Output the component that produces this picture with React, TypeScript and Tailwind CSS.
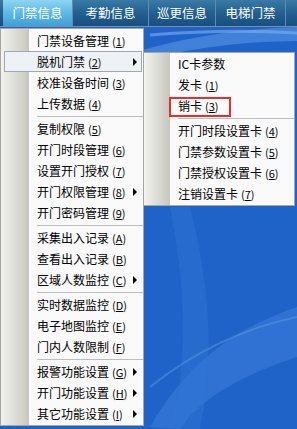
import React from "react";

type Item =
  | { kind: "item"; label: string; key: string; sub?: boolean; hot?: boolean }
  | { kind: "sep" };

const mainItems: Item[] = [
  { kind: "item", label: "门禁设备管理", key: "1" },
  { kind: "item", label: "脱机门禁", key: "2", sub: true, hot: true },
  { kind: "item", label: "校准设备时间", key: "3" },
  { kind: "item", label: "上传数据", key: "4" },
  { kind: "sep" },
  { kind: "item", label: "复制权限", key: "5" },
  { kind: "item", label: "开门时段管理", key: "6" },
  { kind: "item", label: "设置开门授权", key: "7" },
  { kind: "item", label: "开门权限管理", key: "8", sub: true },
  { kind: "item", label: "开门密码管理", key: "9" },
  { kind: "sep" },
  { kind: "item", label: "采集出入记录", key: "A" },
  { kind: "item", label: "查看出入记录", key: "B" },
  { kind: "item", label: "区域人数监控", key: "C", sub: true },
  { kind: "sep" },
  { kind: "item", label: "实时数据监控", key: "D" },
  { kind: "item", label: "电子地图监控", key: "E" },
  { kind: "item", label: "门内人数限制", key: "F" },
  { kind: "sep" },
  { kind: "item", label: "报警功能设置", key: "G", sub: true },
  { kind: "item", label: "开门功能设置", key: "H", sub: true },
  { kind: "item", label: "其它功能设置", key: "I", sub: true },
];

const subItems: Item[] = [
  { kind: "item", label: "IC卡参数", key: "" },
  { kind: "item", label: "发卡", key: "1" },
  { kind: "item", label: "销卡", key: "3" },
  { kind: "sep" },
  { kind: "item", label: "开门时段设置卡", key: "4" },
  { kind: "item", label: "门禁参数设置卡", key: "5" },
  { kind: "item", label: "门禁授权设置卡", key: "6" },
  { kind: "item", label: "注销设置卡", key: "7" },
];

function Label({ label, k }: { label: string; k: string }) {
  return (
    <span className="whitespace-nowrap">
      {label}
      {k && (
        <span className="ml-[3px] text-[11px]">
          (<span className="underline underline-offset-1">{k}</span>)
        </span>
      )}
    </span>
  );
}

function Arrow() {
  return (
    <span className="ml-auto h-0 w-0 border-y-[4px] border-l-[4px] border-y-transparent border-l-black" />
  );
}

function MainMenu() {
  return (
    <div className="absolute left-0 top-[28px] h-[398px] w-[144px] border border-[#a6a6a6] bg-[linear-gradient(90deg,#f3f3ef_0px,#c7c7bf_28px,#fafafa_28px)] pt-[1px]">
      {mainItems.map((it, i) =>
        it.kind === "sep" ? (
          <div key={i} className="flex h-[4px] items-center pl-[36px]">
            <div className="h-[1px] w-full bg-[#bdbdbd]" />
          </div>
        ) : it.hot ? (
          <div
            key={i}
            className="ml-[3px] mr-[1px] flex h-[21px] items-center border border-[#9ea8b4] bg-[#eef2f6] pl-[32px] pr-[4px]"
          >
            <Label label={it.label} k={it.key} />
            {it.sub && <Arrow />}
          </div>
        ) : (
          <div key={i} className="flex h-[21px] items-center pl-[36px] pr-[6px]">
            <Label label={it.label} k={it.key} />
            {it.sub && <Arrow />}
          </div>
        )
      )}
    </div>
  );
}

function SubMenu() {
  return (
    <div className="absolute left-[143px] top-[52px] h-[154px] w-[152px] border border-[#a6a6a6] bg-[linear-gradient(90deg,#f3f3ef_0px,#c7c7bf_26px,#fafafa_26px)]">
      {subItems.map((it, i) =>
        it.kind === "sep" ? (
          <div key={i} className="flex h-[4px] items-center pl-[34px]">
            <div className="h-[1px] w-full bg-[#bdbdbd]" />
          </div>
        ) : (
          <div key={i} className="flex h-[21px] items-center pl-[34px]">
            <Label label={it.label} k={it.key} />
          </div>
        )
      )}
      <div className="absolute left-[25px] top-[44px] h-[20px] w-[62px] border-2 border-[#ec2b2b]" />
    </div>
  );
}

const tabs = [
  { t: "门禁信息", w: "w-[70px]", active: true },
  { t: "考勤信息", w: "w-[76px]" },
  { t: "巡更信息", w: "w-[67px]" },
  { t: "电梯门禁", w: "w-[70px]" },
];

export default function App() {
  return (
    <div
      className="relative h-[429px] w-[297px] overflow-hidden bg-[#1f63c9] text-[12px] text-black"
      style={{ fontFamily: '"Noto Sans CJK SC", "Noto Sans", sans-serif' }}
    >
      <div className="flex h-[27px] border-b border-[#7d90a3] bg-[linear-gradient(180deg,#3a7aa6_0%,#235f8f_50%,#174f80_100%)] pl-[3px]">
        {tabs.map((tb) => (
          <div
            key={tb.t}
            className={`flex ${tb.w} items-center justify-center border-r border-[#5d8db3] text-[12.5px] text-white ${
              tb.active
                ? "bg-[linear-gradient(180deg,#8ed5f2_0%,#62bbe6_45%,#3f9fd6_100%)]"
                : ""
            }`}
          >
            {tb.t}
          </div>
        ))}
      </div>
      <svg
        className="absolute left-0 top-[27px]"
        width="297"
        height="402"
        viewBox="0 0 297 402"
      >
        <rect width="297" height="402" fill="#1f63c9" />
        <path d="M120 30 C180 10 240 2 297 0 L297 14 C240 14 180 22 120 40 Z" fill="#5d9be6" opacity="0.55" />
        <path d="M150 8 C200 4 250 3 297 6" stroke="#7fb2ee" strokeWidth="3" fill="none" opacity="0.6" />
        <path d="M150 400 C190 330 240 300 297 280 L297 330 C250 345 200 370 180 402 Z" fill="#3a7ddb" opacity="0.6" />
        <path d="M170 180 C185 260 190 330 170 402 L200 402 C215 330 210 260 190 180 Z" fill="#2f74d6" opacity="0.5" />
        <path d="M150 360 C200 320 250 300 297 290" stroke="#5a96e4" strokeWidth="2" fill="none" opacity="0.5" />
      </svg>
      <MainMenu />
      <SubMenu />
    </div>
  );
}
